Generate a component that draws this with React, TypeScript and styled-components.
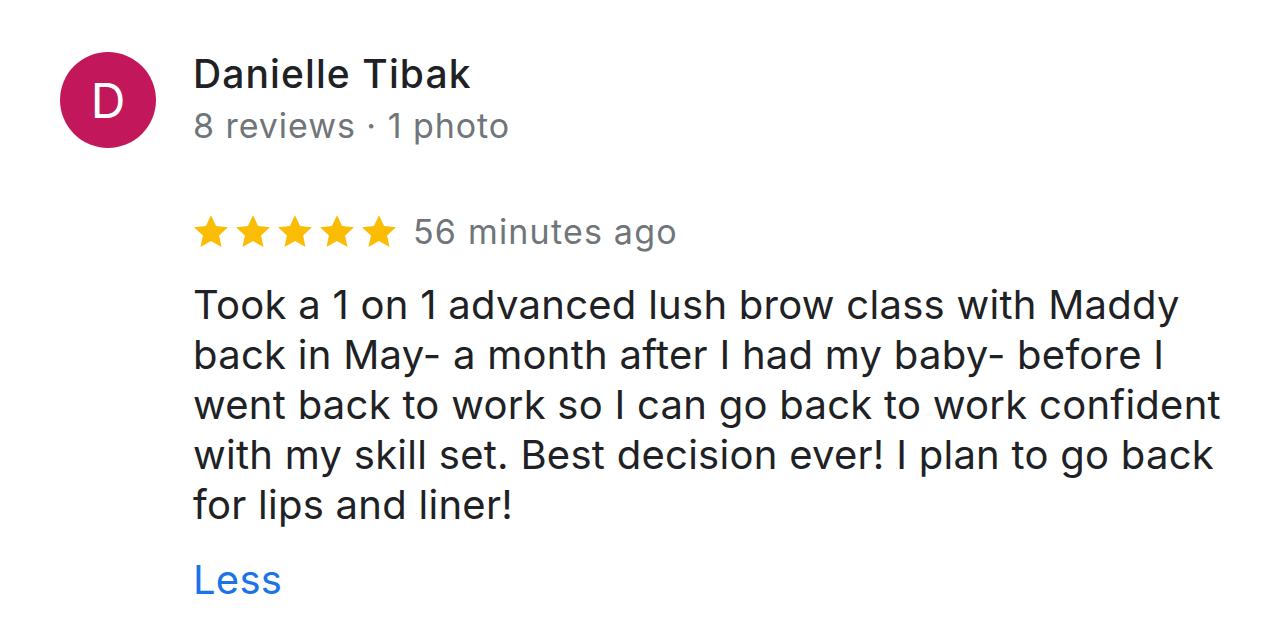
import React from "react";
import styled, { createGlobalStyle } from "styled-components";

const GlobalStyle = createGlobalStyle`
  html, body {
    margin: 0;
    padding: 0;
    background: #ffffff;
  }
  body {
    font-family: Inter, "Noto Sans", Roboto, sans-serif;
    -webkit-font-smoothing: antialiased;
  }
`;

const ReviewCard = styled.article`
  display: flex;
  align-items: flex-start;
  gap: 37px;
  padding: 52px 0 0 60px;
  width: 1284px;
  height: 628px;
  box-sizing: border-box;
`;

const Avatar = styled.div<{ $bg: string }>`
  flex: 0 0 96px;
  width: 96px;
  height: 96px;
  border-radius: 50%;
  background: ${({ $bg }) => $bg};
  color: #ffffff;
  display: flex;
  align-items: center;
  justify-content: center;
  font-size: 48px;
  font-weight: 400;
`;

const Content = styled.div`
  display: flex;
  flex-direction: column;
  margin-top: -3px;
`;

const AuthorName = styled.h2`
  margin: 0;
  font-size: 39px;
  font-weight: 500;
  line-height: 50px;
  letter-spacing: 1.1px;
  color: #202124;
`;

const AuthorMeta = styled.div`
  margin-top: 2px;
  font-size: 34px;
  line-height: 50px;
  letter-spacing: 0.95px;
  color: #70757a;
`;

const RatingRow = styled.div`
  display: flex;
  align-items: center;
  gap: 16px;
  height: 50px;
  margin-top: 55px;
`;

const Stars = styled.div`
  display: flex;
  gap: 6px;
`;

const TimeAgo = styled.span`
  font-size: 34px;
  letter-spacing: 1.2px;
  color: #70757a;
`;

const ReviewText = styled.p`
  margin: 24px 0 0;
  font-size: 40px;
  line-height: 50px;
  letter-spacing: 0.27px;
  color: #202124;
  white-space: nowrap;
`;

const LessLink = styled.a`
  margin-top: 25px;
  font-size: 40px;
  line-height: 50px;
  letter-spacing: 0.25px;
  color: #1a73e8;
  text-decoration: none;
`;

const Star = () => (
  <svg width="36" height="35" viewBox="0 0 24 23">
    <path
      d="M12 0.6l3.4 7.2 7.9 0.9-5.9 5.4 1.6 7.8L12 17.9l-7 4 1.6-7.8-5.9-5.4 7.9-0.9z"
      fill="#fbbc04"
    />
  </svg>
);

const lines = [
  "Took a 1 on 1 advanced lush brow class with Maddy",
  "back in May- a month after I had my baby- before I",
  "went back to work so I can go back to work confident",
  "with my skill set. Best decision ever! I plan to go back",
  "for lips and liner!",
];

const App = () => {
  return (
    <>
      <GlobalStyle />
      <ReviewCard>
        <Avatar $bg="#c2185b">D</Avatar>
        <Content>
          <AuthorName>Danielle Tibak</AuthorName>
          <AuthorMeta>8 reviews · 1 photo</AuthorMeta>
          <RatingRow>
            <Stars>
              {[0, 1, 2, 3, 4].map((i) => (
                <Star key={i} />
              ))}
            </Stars>
            <TimeAgo>56 minutes ago</TimeAgo>
          </RatingRow>
          <ReviewText>
            {lines.map((line, i) => (
              <React.Fragment key={i}>
                {line}
                {i < lines.length - 1 && <br />}
              </React.Fragment>
            ))}
          </ReviewText>
          <LessLink href="#">Less</LessLink>
        </Content>
      </ReviewCard>
    </>
  );
};

export default App;
